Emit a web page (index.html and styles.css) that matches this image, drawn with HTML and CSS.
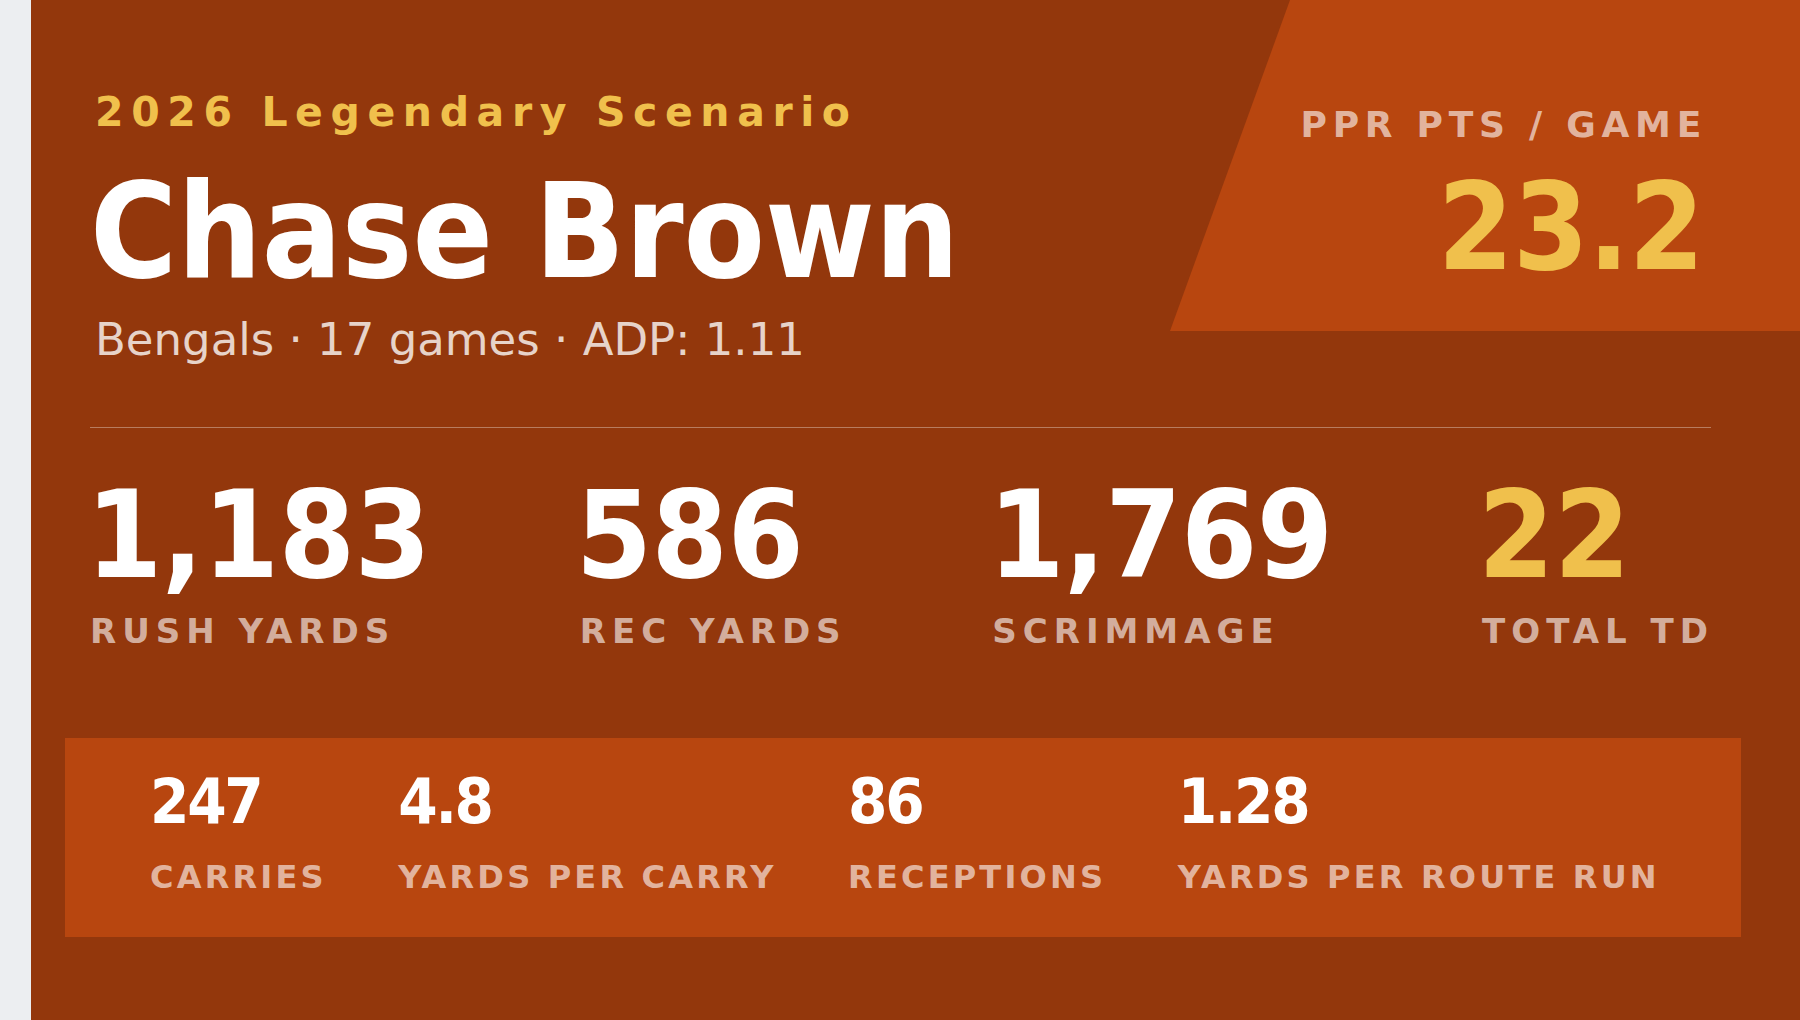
FILE: index.html
```html
<!DOCTYPE html>
<html lang="en">
<head>
<meta charset="utf-8">
<title>Chase Brown – 2026 Legendary Scenario</title>
<link rel="stylesheet" href="styles.css">
</head>
<body>
<main class="card">
  <header class="header">
    <div class="intro">
      <div class="eyebrow">2026 Legendary Scenario</div>
      <h1 class="name">Chase Brown</h1>
      <div class="meta">Bengals · 17 games · ADP: 1.11</div>
    </div>
    <div class="ppr">
      <div class="ppr-label">PPR PTS / GAME</div>
      <div class="ppr-value">23.2</div>
    </div>
  </header>

  <section class="stats">
    <div class="stats-row">
      <div class="stat">
        <div class="stat-value">1,183</div>
        <div class="stat-label">RUSH YARDS</div>
      </div>
      <div class="stat">
        <div class="stat-value">586</div>
        <div class="stat-label">REC YARDS</div>
      </div>
      <div class="stat">
        <div class="stat-value">1,769</div>
        <div class="stat-label">SCRIMMAGE</div>
      </div>
      <div class="stat">
        <div class="stat-value stat-value--gold">22</div>
        <div class="stat-label">TOTAL TD</div>
      </div>
    </div>
  </section>

  <section class="panel">
    <div class="mini">
      <div class="mini-value">247</div>
      <div class="mini-label">CARRIES</div>
    </div>
    <div class="mini">
      <div class="mini-value">4.8</div>
      <div class="mini-label">YARDS PER CARRY</div>
    </div>
    <div class="mini">
      <div class="mini-value">86</div>
      <div class="mini-label">RECEPTIONS</div>
    </div>
    <div class="mini">
      <div class="mini-value">1.28</div>
      <div class="mini-label">YARDS PER ROUTE RUN</div>
    </div>
  </section>
</main>
</body>
</html>
```
FILE: styles.css
```css
* { box-sizing: border-box; }

html, body {
  margin: 0;
  padding: 0;
  background: #eceef1;
  width: 1800px;
  height: 1020px;
  overflow: hidden;
}

body {
  font-family: "DejaVu Sans", sans-serif;
}

.card {
  margin-left: 31px;
  width: 1769px;
  height: 1020px;
  background: #93370c;
  overflow: hidden;
}

/* condensed display type */
.name,
.ppr-value,
.stat-value,
.mini-value {
  font-family: "DejaVu Sans Condensed", "DejaVu Sans", sans-serif;
  font-stretch: condensed;
  font-weight: 700;
}

/* spaced caps labels */
.eyebrow,
.ppr-label,
.stat-label,
.mini-label {
  font-family: "DejaVu Sans", sans-serif;
  font-weight: 700;
}

.header {
  display: flex;
  justify-content: space-between;
  align-items: flex-start;
}

.intro {
  padding: 92px 0 0 64px;
}

.eyebrow {
  font-size: 41px;
  line-height: 41px;
  letter-spacing: 7.6px;
  color: #f0c04c;
}

.name {
  margin: 32px 0 0 -5px;
  font-size: 132px;
  line-height: 132px;
  color: #ffffff;
}

.meta {
  margin-top: 20px;
  font-size: 45px;
  line-height: 45px;
  color: rgba(255, 255, 255, 0.78);
}

.ppr {
  width: 630px;
  height: 331px;
  background: #b8460f;
  clip-path: polygon(19.05% 0, 100% 0, 100% 100%, 0 100%);
  padding: 107px 93px 0 0;
  text-align: right;
}

.ppr-label {
  font-size: 36px;
  line-height: 36px;
  letter-spacing: 5.75px;
  color: rgba(255, 255, 255, 0.62);
}

.ppr-value {
  margin: 24px 3px 0 0;
  font-size: 121px;
  line-height: 121px;
  letter-spacing: -0.6px;
  color: #f0c04c;
}

.stats {
  margin: 65px 89px 0 59px;
  border-top: 1px solid rgba(255, 255, 255, 0.35);
  padding-top: 46px;
}

.stats-row {
  display: flex;
  justify-content: space-between;
  margin-right: -3px;
}

.stat-value {
  margin: 0 4px 0 -4px;
  font-size: 122px;
  line-height: 122px;
  letter-spacing: -0.6px;
  color: #ffffff;
}

.stat-value--gold {
  color: #f0c04c;
}

.stat-label {
  margin-top: 18px;
  font-size: 34px;
  line-height: 34px;
  letter-spacing: 6px;
  color: rgba(255, 255, 255, 0.62);
}

.panel {
  margin: 90px 0 0 34px;
  width: 1676px;
  height: 199px;
  background: #b8460f;
  padding: 32px 0 0 85px;
  display: flex;
  gap: 71.5px;
}

.mini-value {
  font-size: 63px;
  line-height: 63px;
  letter-spacing: -2.3px;
  color: #ffffff;
}

.mini-label {
  margin-top: 28px;
  font-size: 32px;
  line-height: 32px;
  letter-spacing: 3.2px;
  color: rgba(255, 255, 255, 0.62);
}
```
